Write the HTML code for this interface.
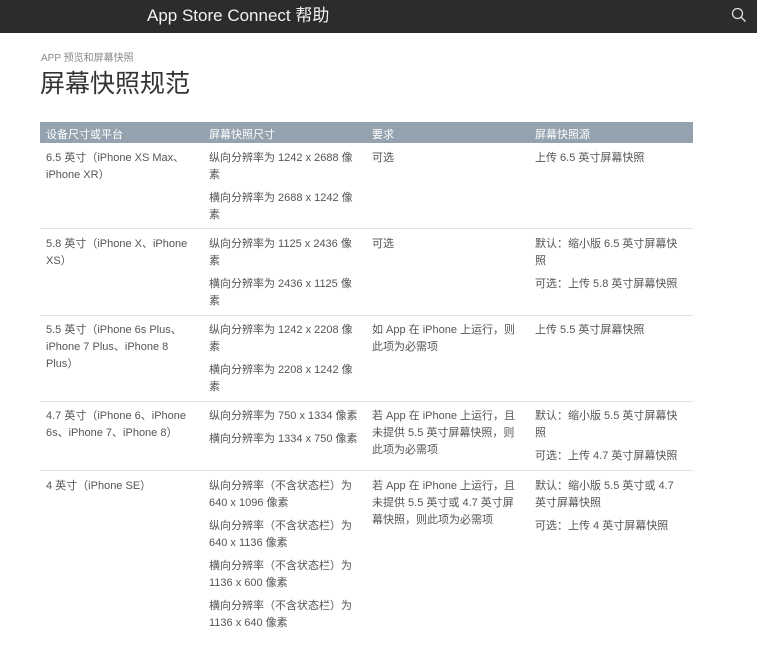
<!DOCTYPE html>
<html><head><meta charset="utf-8"><style>
*{margin:0;padding:0;box-sizing:border-box}
body{width:757px;height:648px;background:#fff;font-family:"Liberation Sans","Noto Sans CJK SC",sans-serif;color:#555;position:relative;overflow:hidden}
.top{position:absolute;left:0;top:0;width:757px;height:33px;background:#2c2c2c}
.top .t{position:absolute;left:147px;top:6px;font-size:17px;color:#f2f2f2;line-height:20px}
.bc{position:absolute;left:41px;top:49px;font-size:10px;color:#888}
h1{position:absolute;left:40px;top:68px;font-size:25px;font-weight:normal;color:#333;line-height:32px}
.th{position:absolute;left:40px;top:122px;width:653px;height:21px;background:#93a2ae;color:#fff;font-size:11px}
.th span{position:absolute;top:4px}
.c{position:absolute;font-size:11px;line-height:17px;color:#555}
.c p{margin-bottom:6px}
.ln{position:absolute;left:40px;width:653px;height:1px;background:#e3e3e3}
.c1{left:46px}.c2{left:209px}.c3{left:372px}.c4{left:535px}
</style></head><body>
<div class="top"><div class="t">App Store Connect 帮助</div>
<svg style="position:absolute;left:731px;top:7px" width="16" height="16" viewBox="0 0 16 16"><circle cx="6.5" cy="6.5" r="5" fill="none" stroke="#ddd" stroke-width="1.3"/><line x1="10.2" y1="10.2" x2="14.5" y2="14.5" stroke="#ddd" stroke-width="1.4"/></svg></div>
<div class="bc">APP 预览和屏幕快照</div>
<h1>屏幕快照规范</h1>
<div class="th"><span style="left:6px">设备尺寸或平台</span><span style="left:169px">屏幕快照尺寸</span><span style="left:332px">要求</span><span style="left:495px">屏幕快照源</span></div>

<div class="c c1" style="top:150px">6.5 英寸（iPhone XS Max、<br>iPhone XR）</div>
<div class="c c2" style="top:150px"><p>纵向分辨率为 1242 x 2688 像<br>素</p><p>横向分辨率为 2688 x 1242 像<br>素</p></div>
<div class="c c3" style="top:150px">可选</div>
<div class="c c4" style="top:150px">上传 6.5 英寸屏幕快照</div>
<div class="ln" style="top:228px"></div>

<div class="c c1" style="top:236px">5.8 英寸（iPhone X、iPhone<br>XS）</div>
<div class="c c2" style="top:236px"><p>纵向分辨率为 1125 x 2436 像<br>素</p><p>横向分辨率为 2436 x 1125 像<br>素</p></div>
<div class="c c3" style="top:236px">可选</div>
<div class="c c4" style="top:236px"><p>默认：缩小版 6.5 英寸屏幕快<br>照</p><p>可选：上传 5.8 英寸屏幕快照</p></div>
<div class="ln" style="top:315px"></div>

<div class="c c1" style="top:322px">5.5 英寸（iPhone 6s Plus、<br>iPhone 7 Plus、iPhone 8<br>Plus）</div>
<div class="c c2" style="top:322px"><p>纵向分辨率为 1242 x 2208 像<br>素</p><p>横向分辨率为 2208 x 1242 像<br>素</p></div>
<div class="c c3" style="top:322px">如 App 在 iPhone 上运行，则<br>此项为必需项</div>
<div class="c c4" style="top:322px">上传 5.5 英寸屏幕快照</div>
<div class="ln" style="top:401px"></div>

<div class="c c1" style="top:408px">4.7 英寸（iPhone 6、iPhone<br>6s、iPhone 7、iPhone 8）</div>
<div class="c c2" style="top:408px"><p>纵向分辨率为 750 x 1334 像素</p><p>横向分辨率为 1334 x 750 像素</p></div>
<div class="c c3" style="top:408px">若 App 在 iPhone 上运行，且<br>未提供 5.5 英寸屏幕快照，则<br>此项为必需项</div>
<div class="c c4" style="top:408px"><p>默认：缩小版 5.5 英寸屏幕快<br>照</p><p>可选：上传 4.7 英寸屏幕快照</p></div>
<div class="ln" style="top:470px"></div>

<div class="c c1" style="top:478px">4 英寸（iPhone SE）</div>
<div class="c c2" style="top:478px"><p>纵向分辨率（不含状态栏）为<br>640 x 1096 像素</p><p>纵向分辨率（不含状态栏）为<br>640 x 1136 像素</p><p>横向分辨率（不含状态栏）为<br>1136 x 600 像素</p><p>横向分辨率（不含状态栏）为<br>1136 x 640 像素</p></div>
<div class="c c3" style="top:478px">若 App 在 iPhone 上运行，且<br>未提供 5.5 英寸或 4.7 英寸屏<br>幕快照，则此项为必需项</div>
<div class="c c4" style="top:478px"><p>默认：缩小版 5.5 英寸或 4.7<br>英寸屏幕快照</p><p>可选：上传 4 英寸屏幕快照</p></div>
</body></html>
